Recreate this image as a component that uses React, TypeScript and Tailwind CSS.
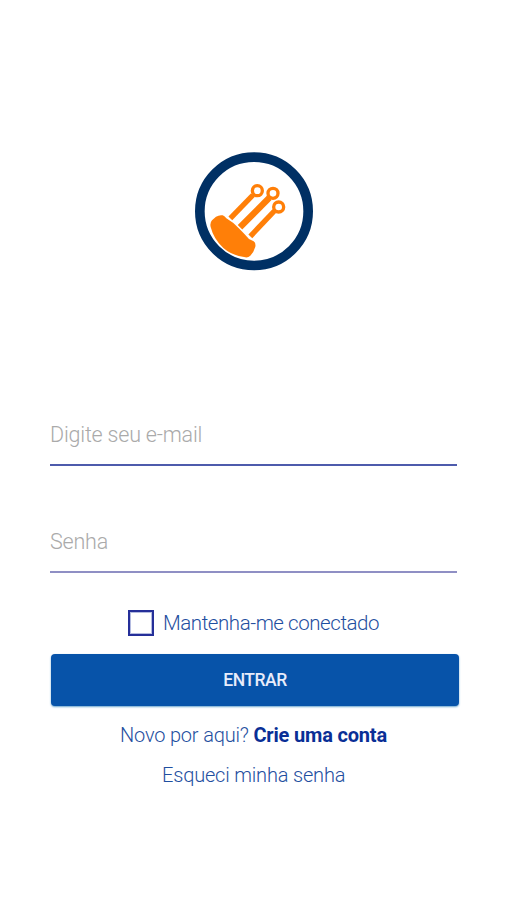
import React from "react";

function Logo() {
  return (
    <svg width="132" height="132" viewBox="0 0 396 396" fill="none">
      <circle cx="198" cy="196" r="162.5" stroke="#003064" strokeWidth="29" />
      <g stroke="#ff7f08" strokeWidth="16">
        <path d="M127 217L195 147" />
        <path d="M156 244L244 155" strokeWidth="19" />
        <path d="M187 271L259 195" />
      </g>
      <g stroke="#ff7f08" strokeWidth="10" fill="#fff">
        <circle cx="208" cy="134" r="15" />
        <circle cx="255" cy="142" r="15" />
        <circle cx="272" cy="183" r="15" />
      </g>
      <path
        d="M84 212Q94 206 104 208Q109 209 115 217Q136 229 154 248Q170 264 183 279L197 286Q204 291 202 302Q198 317 187 329Q181 335 172 334Q133 329 106 306Q77 279 68 243Q65 231 72 223Z"
        fill="#ff7f08"
      />
    </svg>
  );
}

type FieldProps = {
  type: string;
  placeholder: string;
  className: string;
};

function Field({ type, placeholder, className }: FieldProps) {
  return (
    <input
      type={type}
      placeholder={placeholder}
      className={`block h-[62px] w-[407px] border-b-2 bg-transparent text-[21.5px] font-light tracking-[-0.2px] text-[#888] outline-none placeholder:text-[#aaa] ${className}`}
    />
  );
}

export default function App() {
  return (
    <main className="h-[900px] w-[506px] bg-white px-[50px] pt-[146px] font-['Roboto',sans-serif] text-[#1f4fa0]">
      <div className="ml-[138px] h-[132px]">
        <Logo />
      </div>

      <form onSubmit={(e) => e.preventDefault()}>
        <Field
          type="email"
          placeholder="Digite seu e-mail"
          className="mt-[126px] border-[#4d5bac]"
        />
        <Field
          type="password"
          placeholder="Senha"
          className="mt-[45px] border-[#8f8fc4]"
        />

        <label className="mt-[37px] ml-[78px] flex h-[26px] items-center">
          <input
            type="checkbox"
            className="size-[26px] appearance-none border-2 border-[#252f99] shadow-[inset_0_0_0_1px_#b4bbe0]"
          />
          <span className="ml-[9px] text-[20.5px] leading-[24px] font-light tracking-[-0.44px] whitespace-nowrap">
            Mantenha-me conectado
          </span>
        </label>

        <button className="mt-[18px] ml-px block h-[52px] w-[408px] rounded-[4px] bg-[#0753a9] text-[17.5px] font-medium tracking-[-0.5px] text-[#e8ecfb] shadow-[0_1px_2px_#69a5cf]">
          ENTRAR
        </button>
      </form>

      <p className="mt-[14px] ml-[70px] text-[20px] leading-[30px] font-light tracking-[-0.18px] whitespace-nowrap">
        Novo por aqui?{" "}
        <a className="font-bold text-[#0a2f96]">Crie uma conta</a>
      </p>
      <a className="mt-[10px] ml-[112px] block text-[20px] leading-[30px] font-light tracking-[-0.18px] whitespace-nowrap">
        Esqueci minha senha
      </a>
    </main>
  );
}
